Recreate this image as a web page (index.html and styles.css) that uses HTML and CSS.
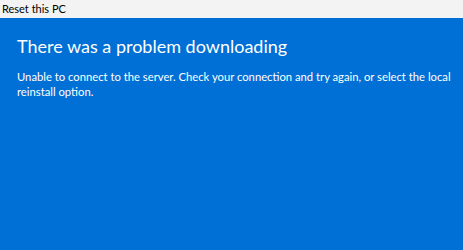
FILE: index.html
```html
<!DOCTYPE html>
<html lang="en">
<head>
    <meta charset="UTF-8">
    <title>Reset this PC</title>
    <link rel="stylesheet" href="styles.css">
</head>
<body>
    <div class="titlebar">Reset this PC</div>
    <div class="panel">
        <h1 class="heading">There was a problem downloading</h1>
        <p class="message">Unable to connect to the server. Check your connection and try again, or select the local reinstall option.</p>
    </div>
</body>
</html>
```

FILE: styles.css
```css
html, body {
    height: 100%;
}
body {
    margin: 0;
    display: flex;
    flex-direction: column;
    font-family: Lato, 'Noto Sans', sans-serif;
    background-color: #0070d6;
}
.titlebar {
    height: 18px;
    line-height: 17px;
    padding-left: 2px;
    font-size: 11px;
    color: #000;
    background-color: #f3f3f3;
}
.panel {
    flex: 1;
    padding: 16px 8px 0 17px;
    color: #fff;
}
.heading {
    margin: 0;
    font-size: 18px;
    font-weight: 400;
    line-height: 24px;
}
.message {
    margin: 11px 0 0;
    font-size: 11.25px;
    line-height: 15px;
}
```
